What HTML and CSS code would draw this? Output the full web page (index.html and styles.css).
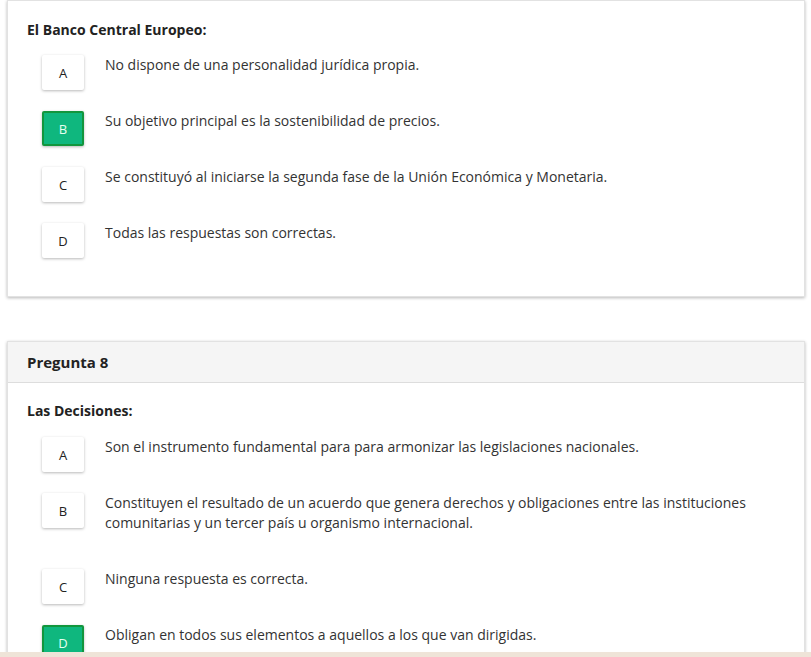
FILE: index.html
```html
<!DOCTYPE html>
<html lang="es">
<head>
<meta charset="utf-8">
<link rel="stylesheet" href="styles.css">
</head>
<body>
<div class="page">
  <section class="card card-first">
    <div class="card-body">
      <h3 class="question">El Banco Central Europeo:</h3>
      <div class="option"><span class="letter">A</span><p class="answer">No dispone de una personalidad jurídica propia.</p></div>
      <div class="option"><span class="letter selected">B</span><p class="answer">Su objetivo principal es la sostenibilidad de precios.</p></div>
      <div class="option"><span class="letter">C</span><p class="answer">Se constituyó al iniciarse la segunda fase de la Unión Económica y Monetaria.</p></div>
      <div class="option"><span class="letter">D</span><p class="answer">Todas las respuestas son correctas.</p></div>
    </div>
  </section>
  <section class="card">
    <header class="card-header">Pregunta 8</header>
    <div class="card-body body-second">
      <h3 class="question">Las Decisiones:</h3>
      <div class="option"><span class="letter">A</span><p class="answer">Son el instrumento fundamental para para armonizar las legislaciones nacionales.</p></div>
      <div class="option"><span class="letter">B</span><p class="answer">Constituyen el resultado de un acuerdo que genera derechos y obligaciones entre las instituciones comunitarias y un tercer país u organismo internacional.</p></div>
      <div class="option"><span class="letter">C</span><p class="answer">Ninguna respuesta es correcta.</p></div>
      <div class="option"><span class="letter selected">D</span><p class="answer">Obligan en todos sus elementos a aquellos a los que van dirigidas.</p></div>
    </div>
  </section>
</div>
<div class="bottom-bar"></div>
</body>
</html>
```

FILE: styles.css
```css
html, body {
  margin: 0;
  padding: 0;
  background: #ffffff;
}
body {
  font-family: "Open Sans", "Liberation Sans", sans-serif;
  color: #333;
  font-size: 14px;
  line-height: 20px;
}
.page {
  padding: 0 6px 0 7px;
}
.card {
  background: #fff;
  border: 1px solid #e2e2e2;
  box-shadow: 0 1px 3px rgba(0, 0, 0, 0.28);
  margin-bottom: 44px;
}
.card-header {
  background: #f5f5f5;
  border-bottom: 1px solid #dddddd;
  height: 40px;
  line-height: 40px;
  padding: 0 19px;
  font-weight: 700;
  font-size: 15px;
  color: #222;
}
.card-body {
  padding: 19px 19px 17px 19px;
}
.body-second {
  padding-top: 18px;
}
.question {
  margin: 0 0 15px 0;
  font-size: 14px;
  line-height: 20px;
  font-weight: 700;
  color: #222;
}
.body-second .question {
  margin-bottom: 16px;
}
.option {
  display: flex;
  align-items: flex-start;
  padding-left: 15px;
}
.letter {
  flex: none;
  width: 42px;
  height: 35px;
  box-sizing: border-box;
  display: flex;
  align-items: center;
  justify-content: center;
  background: #fff;
  border-radius: 2px;
  box-shadow: 0 1px 3px rgba(0, 0, 0, 0.28);
  font-family: "Open Sans", sans-serif;
  font-size: 13px;
  color: #222;
}
.letter.selected {
  background: #0fb77e;
  border: 2px solid #12963d;
  color: #e6fff0;
}
.answer {
  margin: 0 0 0 21px;
  padding-bottom: 36px;
  max-width: 660px;
}
.bottom-bar {
  position: fixed;
  left: 0;
  right: 0;
  bottom: 0;
  height: 5px;
  background: #efe4d8;
}
```
